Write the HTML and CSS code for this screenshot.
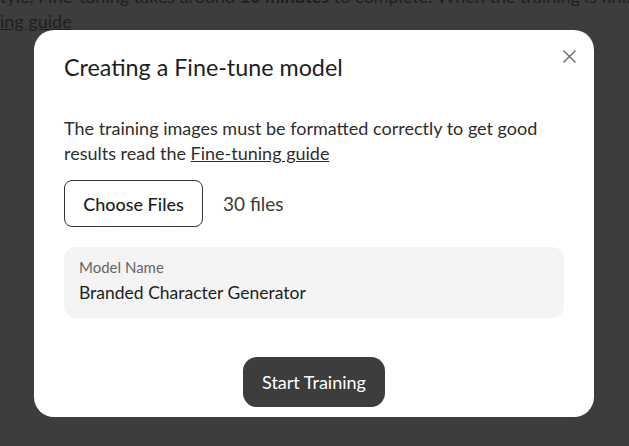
FILE: index.html
```html
<!DOCTYPE html>
<html lang="en">
<head>
<meta charset="utf-8">
<title>Creating a Fine-tune model</title>
<link rel="stylesheet" href="styles.css">
</head>
<body>
<div class="page">
  <p class="page-text">tyle, Fine-tuning takes around <b>10 minutes</b> to complete. When the training is finished you will be notified by email.</p>
  <p class="page-text"><a class="page-link">ing guide</a></p>
</div>
<div class="overlay">
  <div class="modal">
    <button class="close" aria-label="Close">
      <svg width="14" height="14" viewBox="0 0 14 14"><path d="M1 1L13 13M13 1L1 13" stroke="#6b6b6b" stroke-width="1.5" stroke-linecap="round"/></svg>
    </button>
    <h2 class="title">Creating a Fine-tune model</h2>
    <p class="desc">The training images must be formatted correctly to get good results read the <a class="link">Fine-tuning guide</a></p>
    <div class="files">
      <button class="choose">Choose Files</button>
      <span class="count">30 files</span>
    </div>
    <div class="field">
      <div class="label">Model Name</div>
      <div class="value">Branded Character Generator</div>
    </div>
    <div class="actions">
      <button class="start">Start Training</button>
    </div>
  </div>
</div>
</body>
</html>
```
FILE: styles.css
```css
html, body {
  margin: 0;
  height: 100%;
}
body {
  background: #3d3d3d;
  overflow: hidden;
  font-family: "Lato", "Noto Sans", sans-serif;
}
.page {
  margin-top: -16px;
}
.page-text {
  margin: 0;
  white-space: nowrap;
  font-size: 18px;
  line-height: 25px;
  color: #1f1f1f;
}
.page-link {
  text-decoration: underline;
}
.overlay {
  position: fixed;
  inset: 0;
  display: flex;
  justify-content: center;
  align-items: flex-start;
  padding-top: 30px;
  padding-right: 1px;
}
.modal {
  position: relative;
  width: 560px;
  height: 387px;
  box-sizing: border-box;
  background: #fff;
  border-radius: 20px;
  padding: 22px 30px 10px;
  display: flex;
  flex-direction: column;
}
.close {
  position: absolute;
  top: 13px;
  right: 12px;
  width: 26px;
  height: 26px;
  padding: 0;
  border: 0;
  background: none;
  display: flex;
  align-items: center;
  justify-content: center;
}
.close svg {
  width: 13px;
  height: 13px;
}
.title {
  margin: 0;
  font-size: 23.3px;
  font-weight: 400;
  line-height: 30px;
  color: #1e1e1e;
}
.desc {
  margin: 34px 0 0;
  font-size: 18px;
  line-height: 25px;
  color: #2e2e2e;
}
.link {
  text-decoration: underline;
  color: #2e2e2e;
}
.files {
  display: flex;
  align-items: center;
  gap: 20px;
  margin-top: 14px;
}
.choose {
  height: 47px;
  width: 139px;
  box-sizing: border-box;
  border: 1px solid #333;
  border-radius: 8px;
  background: #fff;
  font-family: inherit;
  font-size: 18px;
  font-weight: 500;
  color: #1e1e1e;
  padding: 0;
}
.count {
  font-size: 19px;
  color: #3a3a3a;
}
.field {
  margin-top: 20px;
  background: #f4f4f4;
  border-radius: 12px;
  height: 71px;
  box-sizing: border-box;
  padding: 10px 15px;
}
.label {
  font-size: 15px;
  line-height: 20px;
  color: #666;
}
.value {
  margin-top: 4px;
  font-size: 17.5px;
  line-height: 24px;
  color: #1e1e1e;
}
.actions {
  margin-top: auto;
  display: flex;
  justify-content: center;
}
.start {
  width: 142px;
  height: 50px;
  border: 0;
  border-radius: 14px;
  background: #3d3d3d;
  color: #fff;
  font-family: inherit;
  font-size: 18px;
  padding: 0;
}
```
